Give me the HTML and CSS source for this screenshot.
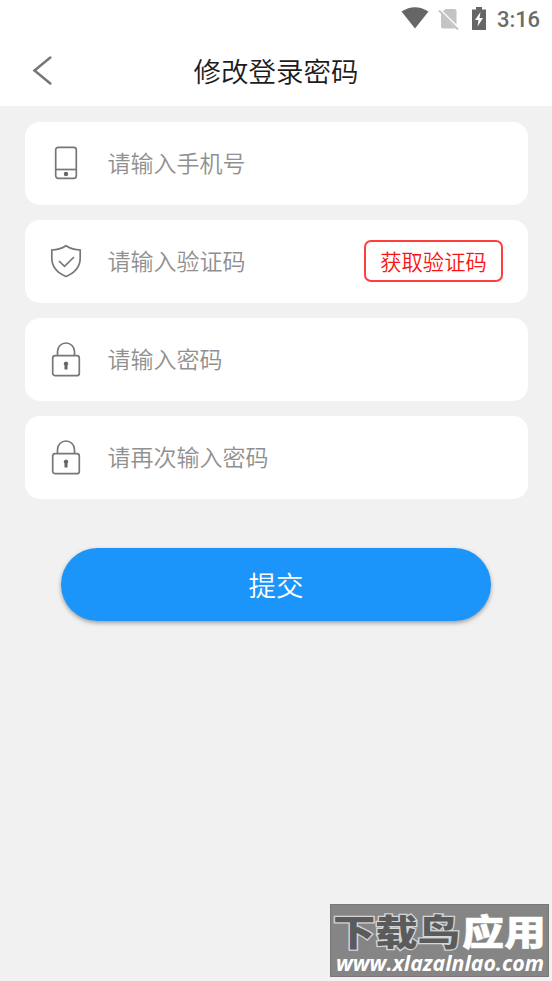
FILE: index.html
```html
<!DOCTYPE html>
<html lang="zh-CN">
<head>
<meta charset="utf-8">
<title>修改登录密码</title>
<link rel="stylesheet" href="styles.css">
</head>
<body>
<header class="header">
  <div class="status">
    <svg class="wifi" width="28" height="22" viewBox="0 0 28 22"><path d="M.5 4.500Q14-4 27.500 4.500L14 21.500Z"/></svg>
    <svg class="sim" width="22" height="24" viewBox="0 0 22 24"><path class="sim-body" d="M7.500 2H16.500Q18.500 2 18.500 4V17.500L4.800 4.200ZM3 6.500L17.500 21.500H5Q3 21.500 3 19.500Z"/><path class="sim-line" d="M1 3.500L20 22.500"/></svg>
    <svg class="battery" width="14" height="23" viewBox="0 0 14 23"><path d="M4 0H10V2.500H14V23H0V2.500H4Z"/><path class="bolt" d="M8.500 5L3 13H6.500L5.500 19.500L11 11H7.500Z"/></svg>
    <span class="time">3:16</span>
  </div>
  <nav class="nav">
    <svg class="back" width="20" height="30" viewBox="0 0 20 30"><path d="M18.300 1.500L2.500 14.500L18.300 27.500"/></svg>
    <h1 class="title">修改登录密码</h1>
  </nav>
</header>
<main class="form">
  <label class="field">
    <svg class="icon" width="32" height="36" viewBox="0 0 32 36"><rect x="5.700" y="2.300" width="20.600" height="31" rx="2.500"/><path d="M6 24.500H26"/><circle class="solid" cx="16" cy="29" r="2.200"/></svg>
    <span class="hint">请输入手机号</span>
  </label>
  <label class="field">
    <svg class="icon" width="32" height="36" viewBox="0 0 32 36"><path d="M16 2.800Q9.500 7 1.800 7V15Q1.800 27.500 16 33.500Q30.200 27.500 30.200 15V7Q22.500 7 16 2.800Z"/><path d="M9 18L14.500 23.300L24 14"/></svg>
    <span class="hint">请输入验证码</span>
    <button class="code">获取验证码</button>
  </label>
  <label class="field">
    <svg class="icon" width="32" height="36" viewBox="0 0 32 36"><rect x="2.700" y="14.700" width="26.600" height="20" rx="2.500"/><path d="M7.500 14.500V10.500A8.500 8.500 0 0 1 24.500 10.500V14.500"/><path class="solid" d="M16 20.500A2.300 2.300 0 0 0 14.500 24.500V28.500H17.500V24.500A2.300 2.300 0 0 0 16 20.500Z"/></svg>
    <span class="hint">请输入密码</span>
  </label>
  <label class="field">
    <svg class="icon" width="32" height="36" viewBox="0 0 32 36"><rect x="2.700" y="14.700" width="26.600" height="20" rx="2.500"/><path d="M7.500 14.500V10.500A8.500 8.500 0 0 1 24.500 10.500V14.500"/><path class="solid" d="M16 20.500A2.300 2.300 0 0 0 14.500 24.500V28.500H17.500V24.500A2.300 2.300 0 0 0 16 20.500Z"/></svg>
    <span class="hint">请再次输入密码</span>
  </label>
  <button class="submit">提交</button>
</main>
<aside class="watermark">
  <svg width="219" height="73" viewBox="0 0 219 73">
    <text class="brand brand-dark" x="3" y="42" textLength="127" lengthAdjust="spacingAndGlyphs">下载鸟</text>
    <text class="brand brand-light" x="132" y="42" textLength="84" lengthAdjust="spacingAndGlyphs">应用</text>
    <text class="url" x="6" y="66.500" textLength="208" lengthAdjust="spacingAndGlyphs">www.xlazalnlao.com</text>
  </svg>
</aside>
</body>
</html>
```
FILE: styles.css
```css
* { box-sizing: border-box; }
body {
  margin: 0;
  min-height: 981px;
  background: #f1f1f1;
  font-family: "Noto Sans CJK SC", sans-serif;
  position: relative;
}
.header { height: 105.500px; background: #fff; }
.status {
  height: 38px;
  display: flex;
  align-items: center;
  justify-content: flex-end;
  padding-right: 12px;
  color: #6b6b6b;
  fill: #666;
}
.wifi { margin-right: 9px; margin-top: -3px; }
.sim { margin-right: 12px; margin-top: -1px; }
.sim-body { fill: #c4c4c4; }
.sim-line { stroke: #c4c4c4; stroke-width: 2; }
.battery { margin-right: 11px; margin-top: -1px; }
.bolt { fill: #fff; }
.time { font: 500 22px/38px Roboto, sans-serif; padding-top: 2px; letter-spacing: -.1px; }
.nav {
  height: 64px;
  display: grid;
  grid-template-columns: 60px 1fr 60px;
  align-items: center;
}
.back { margin-left: 32px; margin-top: 2px; fill: none; stroke: #777; stroke-width: 2.500; stroke-linecap: round; }
.title { margin: 0; text-align: center; font-size: 27.500px; line-height: 40px; font-weight: 350; color: #1c1c1c; }
.form { padding: 16.500px 24.500px 0; display: flex; flex-direction: column; gap: 15.500px; }
.field {
  height: 82.500px;
  background: #fff;
  border-radius: 15px;
  display: flex;
  align-items: center;
  padding: 0 24.500px 0 25.500px;
}
.icon { fill: none; stroke: #777; stroke-width: 1.700; margin-right: 25.500px; flex: none; }
.icon .solid { fill: #666; stroke: none; }
.hint { font-size: 23px; line-height: 34px; color: #909090; font-weight: 350; flex: 1; padding-bottom: 2px; }
.code {
  width: 139px;
  height: 42px;
  padding: 0;
  border: 2px solid #ff3d3d;
  border-radius: 7px;
  background: #fff;
  color: #fa1515;
  font: 350 21.300px/36px "Noto Sans CJK SC", sans-serif;
}
.submit {
  margin: 33.500px 36.500px 0;
  height: 73px;
  border: 0;
  border-radius: 37px;
  background: #1c95fa;
  color: #fff;
  font: 350 27.500px/40px "Noto Sans CJK SC", sans-serif;
  box-shadow: 0 2px 4px rgba(0, 0, 0, .35);
}
.watermark {
  position: absolute;
  right: 3px;
  bottom: 4px;
  width: 219px;
  height: 73px;
  background: #858585;
  box-shadow: inset 0 0 0 1px #777;
}
.brand { font-size: 36px; font-weight: 900; paint-order: stroke; }
.brand-dark { fill: #5b5b5b; stroke: #d5d5d5; stroke-width: 2.500; }
.brand-light { fill: #fff; stroke: #eee; stroke-width: .5; }
.url { font: italic 700 20.500px "Open Sans", sans-serif; fill: #fff; }
```
